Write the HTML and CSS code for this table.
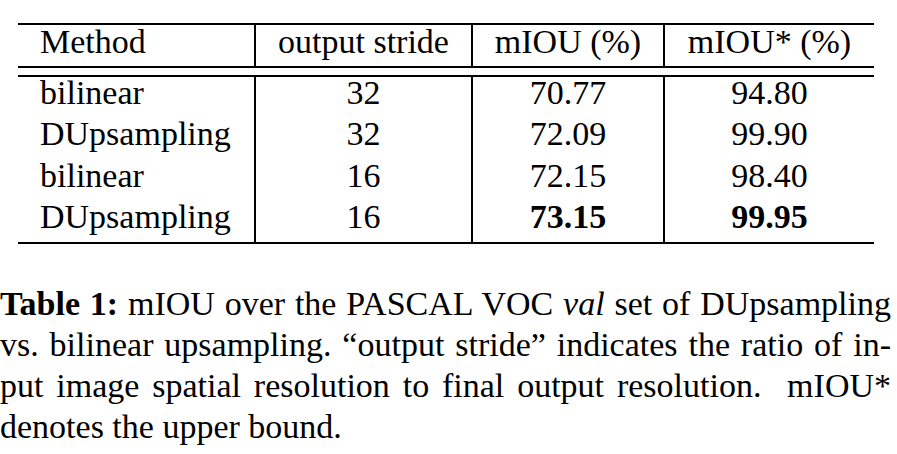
FILE: index.html
```html
<!DOCTYPE html>
<html lang="en">
<head>
  <meta charset="UTF-8" />
  <meta name="viewport" content="width=device-width, initial-scale=1" />
  <title>Table 1: DUpsampling vs. bilinear</title>
  <link rel="stylesheet" href="styles.css">
</head>
<body>
  <table class="results">
    <colgroup>
      <col class="col-method">
      <col class="col-stride">
      <col class="col-miou">
      <col class="col-bound">
    </colgroup>
    <thead>
      <tr>
        <th class="method">Method</th>
        <th>output stride</th>
        <th>mIOU (%)</th>
        <th>mIOU* (%)</th>
      </tr>
    </thead>
    <tbody>
      <tr class="gap"><td colspan="4"></td></tr>
      <tr class="first">
        <td class="method">bilinear</td>
        <td>32</td>
        <td>70.77</td>
        <td>94.80</td>
      </tr>
      <tr>
        <td class="method">DUpsampling</td>
        <td>32</td>
        <td>72.09</td>
        <td>99.90</td>
      </tr>
      <tr>
        <td class="method">bilinear</td>
        <td>16</td>
        <td>72.15</td>
        <td>98.40</td>
      </tr>
      <tr class="last">
        <td class="method">DUpsampling</td>
        <td>16</td>
        <td><strong>73.15</strong></td>
        <td><strong>99.95</strong></td>
      </tr>
    </tbody>
  </table>

  <p class="caption">
    <span class="line"><strong>Table 1:</strong> mIOU over the PASCAL VOC <i>val</i> set of DUpsampling</span>
    <span class="line">vs. bilinear upsampling. &ldquo;output stride&rdquo; indicates the ratio of in-</span>
    <span class="line">put image spatial resolution to final output resolution.&nbsp; mIOU*</span>
    <span class="line end">denotes the upper bound.</span>
  </p>
</body>
</html>
```

FILE: styles.css
```css
body {
  margin: 0;
  background: #fff;
  color: #000;
  font-family: "Liberation Serif", "Times New Roman", serif;
  font-size: 34px;
}

.results {
  margin: 23px 0 0 18px;
  width: 856px;
  table-layout: fixed;
  border-collapse: separate;
  border-spacing: 0;
}
.col-method { width: 236px; }
.col-stride { width: 217px; }
.col-miou { width: 192px; }
.col-bound { width: 211px; }

.results th,
.results td {
  padding: 0;
  text-align: center;
  white-space: nowrap;
}
.results th {
  font-weight: normal;
  line-height: 33px;
  padding-bottom: 8px;
  border-top: 2px solid #000;
  border-bottom: 2px solid #000;
}
.results td {
  line-height: 31px;
  padding-bottom: 10.3px;
}
.results th + th,
.results td + td {
  border-left: 2px solid #000;
}
.results .method {
  text-align: left;
  padding-left: 22px;
}
.results .gap td {
  height: 7px;
  padding: 0;
  line-height: 0;
}
.results .first td {
  border-top: 2px solid #000;
}
.results .last td {
  border-bottom: 2px solid #000;
}
.results strong {
  font-weight: bold;
}

.caption {
  margin: 39px 0 0;
  width: 891px;
  line-height: 41px;
  word-spacing: -2px;
}
.caption .line {
  display: block;
  text-align: justify;
  text-align-last: justify;
}
.caption .line.end {
  text-align-last: left;
  word-spacing: normal;
}
```
